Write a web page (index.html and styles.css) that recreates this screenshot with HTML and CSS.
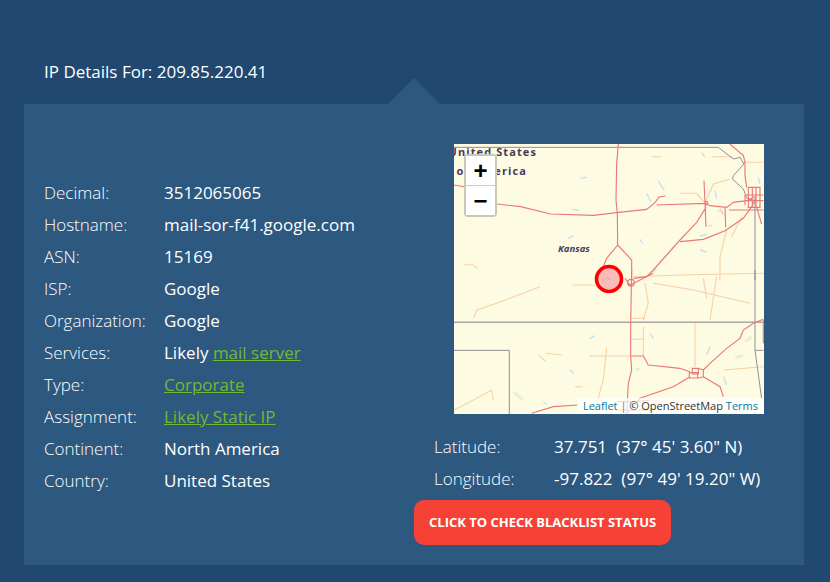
FILE: index.html
```html
<!DOCTYPE html>
<html lang="en">
<head>
  <meta charset="UTF-8">
  <meta name="viewport" content="width=device-width, initial-scale=1.0">
  <title>IP Details For: 209.85.220.41</title>
  <link rel="stylesheet" href="styles.css">
</head>
<body>
  <h2 class="page-title">IP Details For: 209.85.220.41</h2>

  <div class="panel">
    <div class="details">
      <div class="row"><span class="label">Decimal:</span><span class="value">3512065065</span></div>
      <div class="row"><span class="label">Hostname:</span><span class="value">mail-sor-f41.google.com</span></div>
      <div class="row"><span class="label">ASN:</span><span class="value">15169</span></div>
      <div class="row"><span class="label">ISP:</span><span class="value">Google</span></div>
      <div class="row"><span class="label">Organization:</span><span class="value">Google</span></div>
      <div class="row"><span class="label">Services:</span><span class="value">Likely <a href="#">mail server</a></span></div>
      <div class="row"><span class="label">Type:</span><span class="value"><a href="#">Corporate</a></span></div>
      <div class="row"><span class="label">Assignment:</span><span class="value"><a href="#">Likely Static IP</a></span></div>
      <div class="row"><span class="label">Continent:</span><span class="value">North America</span></div>
      <div class="row"><span class="label">Country:</span><span class="value">United States</span></div>
    </div>

    <div class="location">
      <div class="map">
        <svg class="map-art" width="310" height="270" viewBox="0 0 310 270">
          <!-- top half, coords are 3x -->
          <g transform="translate(-14,-14) scale(0.33333)">
            <path class="water" d="M420 145l20 -3M655 152l18 30M620 190l12 25M395 238l22 4M385 325l15 -8M600 328l8 12M780 318l20 -4M780 360l20 6M825 182l5 25M835 242l15 5M805 287h12M780 317h15M955 142l5 20"/>
            <path class="minor" d="M720 190h50l25 30M870 147l-50 15l-25 58M785 67l10 15M815 80h65M635 80h28M580 440l140 -5l250 -5M860 300l-20 80v70M840 235l10 20M905 260l-30 60M73 404h25l15 12M910 97h60"/>
            <path class="border" d="M42 52H835l45 35l20 -5l12 20l-32 35l-3 10l33 30l10 27l25 8M945 202V450"/>
            <path class="road" d="M42 165l30 5l15 22l85 30l70 8l90 22l128 4l70 -8l90 -10l25 -20l12 -17l20 -3M650 225l145 -5l15 7l50 5l20 -15l40 -5l25 -12M535 42l-5 58l-2 110l4 40l1 95l-33 40l-10 25M533 345l42 45v55M798 232l-28 45l-50 53l-40 45l-40 45l-20 20l-40 5M720 335l70 -7l65 -26l55 -37l25 -35l15 -30M792 152l3 68l3 70M855 232l2 60M870 42l40 35l5 20v40l5 35M867 240h103M925 172h35v60h-35zM937 172v60M948 172v60M915 195h55M915 212h55M915 195v30M950 232l15 50M794 220a5 5 0 1 0 10 0a5 5 0 1 0 -10 0"/>
          </g>
          <!-- bottom half -->
          <g transform="translate(-14,126) scale(0.33333)">
            <path class="water" d="M450 205l15 -8M630 190l10 15M810 230l-10 25M390 300l12 10M310 395l10 8M640 5l10 -8M850 320l10 25M500 22l12 8"/>
            <path class="green" d="M220 365l30 25M885 262l25 -5M915 215l20 -15M585 300l15 -5"/>
            <path class="minor" d="M100 145l10 -25l60 -20l130 -50M42 420l58 -30l55 -30l5 30M295 255l23 20M318 250l47 5M500 232l-10 98l-20 70M610 170v90M615 40l10 60l-15 50M765 160v130M830 20l-20 130M640 40l120 20l170 40M850 300l120 -10M398 45h67M447 258H575M405 350h20M790 25l10 60M575 145h40M575 208h35"/>
            <path class="border" d="M42 241H208V432M945 0V241H970M945 241l20 145"/>
            <path class="border-main" d="M42 157H970"/>
            <path class="road" d="M575 0l-3 160v100l3 40l-10 40l-5 92M555 25l15 20l20 -10l50 -25M563 38a10 10 0 1 0 20 0a10 10 0 1 0 -20 0M970 148l-30 12l-30 20l-10 25l-40 30l-50 45l-20 20M575 258H610l15 27l95 10l30 10M790 320l50 30l10 30M750 320l-50 30l-100 35l-40 47M275 430l65 -20l75 -5M748 308h25v16h-25zM757 295h18v17h-18zM775 295l15 5v20l-15 5M970 150v70M530 395h60l40 -5M525 420h110"/>
          </g>
          <text class="map-country" x="83" y="12" text-anchor="end">United States</text>
          <text class="map-country" x="73" y="31" text-anchor="end">of America</text>
          <text class="map-state" x="104" y="108">Kansas</text>
          <circle class="marker" cx="155" cy="135" r="12.5"/>
        </svg>
        <div class="zoom-control">
          <a class="zoom-btn" href="#">+</a>
          <a class="zoom-btn" href="#">−</a>
        </div>
        <div class="attribution"><a href="#">Leaflet</a> <span class="sep">|</span> © OpenStreetMap <a href="#">Terms</a></div>
      </div>

      <div class="coords">
        <div class="row"><span class="label">Latitude:</span><span class="value">37.751&nbsp; (37° 45' 3.60" N)</span></div>
        <div class="row"><span class="label">Longitude:</span><span class="value">-97.822&nbsp; (97° 49' 19.20" W)</span></div>
      </div>

      <a class="check-btn" href="#">Click to check blacklist status</a>
    </div>
  </div>
</body>
</html>
```

FILE: styles.css
```css
body {
  margin: 0;
  background-color: #204871;
  color: #fff;
  font-family: "Open Sans", Arial, sans-serif;
  font-size: 17px;
  overflow: hidden;
}
a {
  color: #71b834;
}
.page-title {
  margin: 0;
  padding: 56px 0 16px 44px;
  font-size: 17px;
  font-weight: 400;
  line-height: 32px;
}
.panel {
  position: relative;
  display: flex;
  width: 780px;
  margin-left: 24px;
  padding-bottom: 20px;
  background-color: #2d587f;
}
.panel::before {
  content: "";
  position: absolute;
  top: -26px;
  left: 364px;
  border-left: 26px solid transparent;
  border-right: 26px solid transparent;
  border-bottom: 26px solid #2d587f;
}
.details {
  width: 370px;
  padding: 73px 0 0 20px;
}
.row {
  display: flex;
  line-height: 32px;
}
.label {
  width: 120px;
  font-weight: 300;
}
.value {
  white-space: pre-wrap;
}
.location {
  width: 390px;
  padding-top: 40px;
}
.map {
  position: relative;
  width: 310px;
  height: 270px;
  margin-left: 40px;
  background-color: #fefbe3;
  overflow: hidden;
}
.map-art {
  display: block;
}
.map-art path {
  fill: none;
}
.road {
  stroke: #ea7878;
  stroke-width: 3.4;
}
.minor {
  stroke: #f8cfa4;
  stroke-width: 3.2;
}
.border {
  stroke: #928e96;
  stroke-width: 3;
}
.border-main {
  stroke: #a9a6a6;
  stroke-width: 4.5;
}
.water {
  stroke: #c4e0f2;
  stroke-width: 4;
}
.green {
  stroke: #e9f0cb;
  stroke-width: 8;
}
.map-country {
  fill: #463a5c;
  font-size: 11px;
  font-weight: 700;
  letter-spacing: 1.1px;
}
.map-state {
  fill: #463a5c;
  font-size: 9.5px;
  font-weight: 700;
  font-style: italic;
}
.marker {
  fill: rgba(246, 120, 140, 0.48);
  stroke: #f00;
  stroke-width: 3.6;
}
.zoom-control {
  position: absolute;
  top: 10px;
  left: 10px;
  border: 2px solid #c9c7b5;
  border-radius: 4px;
}
.zoom-btn {
  display: block;
  box-sizing: border-box;
  width: 29px;
  height: 29px;
  background-color: #fff;
  color: #000;
  font-family: "Liberation Sans", Arial, sans-serif;
  font-size: 24px;
  font-weight: 700;
  line-height: 29px;
  text-align: center;
  text-decoration: none;
}
.zoom-btn + .zoom-btn {
  height: 30px;
  border-top: 1px solid #ccc;
}
.attribution {
  position: absolute;
  right: 0;
  bottom: 0;
  padding: 0 6px;
  background-color: rgba(255, 255, 255, 0.7);
  color: #333;
  font-size: 11px;
  line-height: 16px;
}
.attribution a {
  color: #0078a8;
  text-decoration: none;
}
.sep {
  color: #777;
}
.coords {
  margin: 17px 0 5px 20px;
}
.check-btn {
  display: inline-block;
  padding: 0 15px;
  border-radius: 10px;
  background-color: #f64137;
  color: #fff;
  font-size: 13px;
  font-weight: 700;
  line-height: 45px;
  text-decoration: none;
  text-transform: uppercase;
}
```
